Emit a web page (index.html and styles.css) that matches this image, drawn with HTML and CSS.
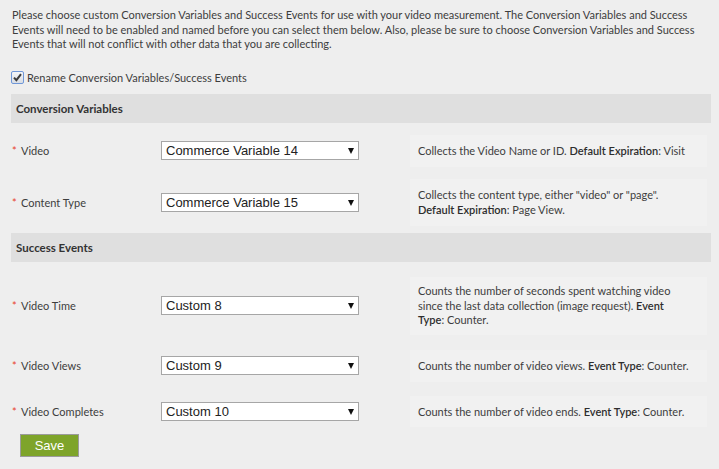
FILE: index.html
```html
<!DOCTYPE html>
<html>
<head>
<meta charset="utf-8">
<link rel="stylesheet" href="styles.css">
</head>
<body>
<div class="wrap">
  <p class="intro">Please choose custom Conversion Variables and Success Events for use with your video measurement. The Conversion Variables and Success Events will need to be enabled and named before you can select them below. Also, please be sure to choose Conversion Variables and Success Events that will not conflict with other data that you are collecting.</p>

  <label class="check-row">
    <span class="checkbox"><svg width="9" height="9" viewBox="0 0 9 9"><path d="M1 4.6 L3.4 7.2 L8 1.2" fill="none" stroke="#3c3c3c" stroke-width="2"/></svg></span>
    <span>Rename Conversion Variables/Success Events</span>
  </label>

  <div class="section-head">Conversion Variables</div>

  <div class="row row-first">
    <div class="label"><span class="req">*</span>Video</div>
    <div class="select-wrap"><select class="select"><option>Commerce Variable 14</option></select></div>
    <div class="help">Collects the Video Name or ID. <b>Default Expiration</b>: Visit</div>
  </div>

  <div class="row">
    <div class="label"><span class="req">*</span>Content Type</div>
    <div class="select-wrap"><select class="select"><option>Commerce Variable 15</option></select></div>
    <div class="help">Collects the content type, either "video" or "page".<br><b>Default Expiration</b>: Page View.</div>
  </div>

  <div class="section-head section-head-2">Success Events</div>

  <div class="row row-first-2">
    <div class="label"><span class="req">*</span>Video Time</div>
    <div class="select-wrap"><select class="select"><option>Custom 8</option></select></div>
    <div class="help help-tall">Counts the number of seconds spent watching video<br>since the last data collection (image request). <b>Event</b><br><b>Type</b>: Counter.</div>
  </div>

  <div class="row row-mid">
    <div class="label"><span class="req">*</span>Video Views</div>
    <div class="select-wrap"><select class="select"><option>Custom 9</option></select></div>
    <div class="help">Counts the number of video views. <b>Event Type</b>: Counter.</div>
  </div>

  <div class="row row-last">
    <div class="label"><span class="req">*</span>Video Completes</div>
    <div class="select-wrap"><select class="select"><option>Custom 10</option></select></div>
    <div class="help help-short">Counts the number of video ends. <b>Event Type</b>: Counter.</div>
  </div>

  <button class="save">Save</button>
</div>
</body>
</html>
```

FILE: styles.css
```css
html, body {
  margin: 0;
  padding: 0;
  background: #eeeeee;
}
body {
  font-family: Lato, "Open Sans", sans-serif;
  font-size: 11px;
  color: #3d3d3d;
  width: 719px;
  height: 469px;
  overflow: hidden;
}
.wrap {
  padding: 8px 0 0 11px;
}
.intro {
  margin: 0 0 0 1px;
  width: 700px;
  line-height: 14.5px;
}
.check-row {
  display: flex;
  align-items: center;
  gap: 3px;
  margin-top: 19px;
  height: 14px;
}
.checkbox {
  width: 11px;
  height: 11px;
  border: 1px solid #6f97d8;
  border-radius: 2px;
  background: linear-gradient(#f4f6f9, #d9dde3);
  display: flex;
  align-items: center;
  justify-content: center;
}
.section-head {
  margin-top: 9px;
  width: 695px;
  height: 29px;
  background: #dfdfdf;
  font-weight: bold;
  font-size: 11.5px;
  color: #333;
  padding-left: 5px;
  display: flex;
  align-items: center;
}
.section-head-2 {
  margin-top: 7px;
}
.row {
  display: grid;
  grid-template-columns: 150px 249px 297px;
  align-items: center;
  margin-top: 12px;
}
.row-first-2 {
  margin-top: 15px;
}
.row-mid {
  margin-top: 15px;
}
.row-last {
  margin-top: 14px;
}
.label {
  display: flex;
  align-items: center;
  padding-left: 1px;
}
.req {
  color: #e8412c;
  width: 9px;
}
.select-wrap {
  position: relative;
  width: 198px;
  height: 19px;
}
.select {
  appearance: none;
  -webkit-appearance: none;
  width: 198px;
  height: 19px;
  margin: 0;
  border: 1px solid #a6a6a6;
  border-radius: 0;
  background: #fff;
  font-family: "Liberation Sans", Arial, sans-serif;
  font-size: 13px;
  color: #222;
  padding: 0 0 0 4px;
  line-height: 17px;
}
.select-wrap::after {
  content: "";
  position: absolute;
  right: 5px;
  top: 7px;
  border-left: 3px solid transparent;
  border-right: 3px solid transparent;
  border-top: 6px solid #111;
}
.help {
  background: #f1f1f1;
  padding: 9px 8px;
  line-height: 14.5px;
  color: #3d3d3d;
}
.help-tall {
  padding-top: 7px;
  padding-bottom: 7px;
}
.help-short {
  padding-top: 8.5px;
  padding-bottom: 8px;
}
.help b {
  font-weight: 600;
  color: #2d2d2d;
}
.save {
  display: block;
  margin: 7px 0 0 9px;
  width: 59px;
  height: 23px;
  background: #7ea42a;
  border: 1px solid #9b9b9b;
  color: #fff;
  font-family: "Liberation Sans", Arial, sans-serif;
  font-size: 13px;
  padding: 0;
}
```
